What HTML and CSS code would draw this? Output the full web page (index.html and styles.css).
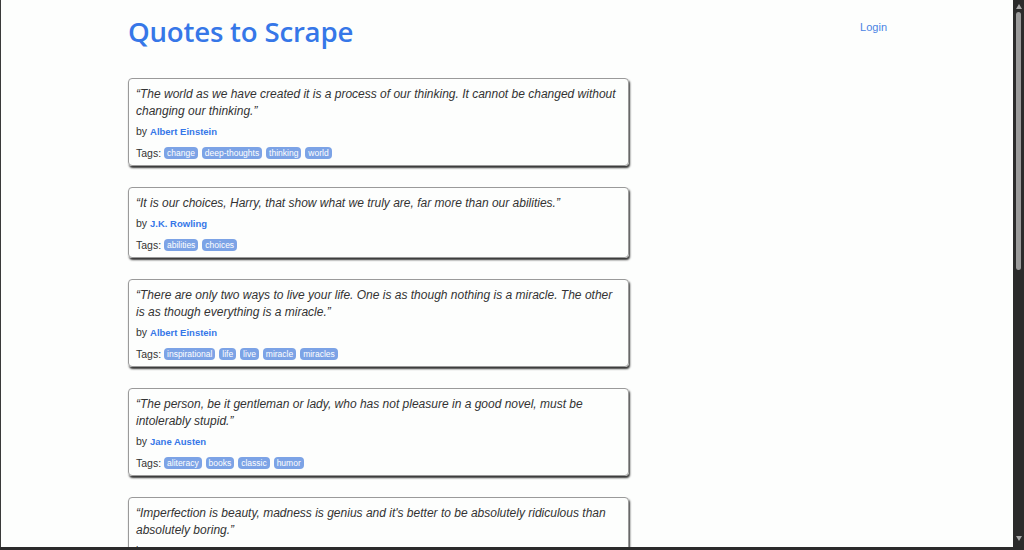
FILE: index.html
```html
<!DOCTYPE html>
<html lang="en">
<head>
  <meta charset="UTF-8">
  <meta name="viewport" content="width=device-width, initial-scale=1.0">
  <title>Quotes to Scrape</title>
  <link rel="stylesheet" href="styles.css">
</head>
<body>
  <div class="window">
    <div class="viewport">
      <div class="container">
        <!-- Cabecera -->
        <header class="header">
          <h1><a href="#">Quotes to Scrape</a></h1>
          <a class="login" href="#">Login</a>
        </header>

        <!-- Lista de citas -->
        <div class="quotes">
          <div class="quote">
            <span class="text">“The world as we have created it is a process of our thinking. It cannot be changed without changing our thinking.”</span>
            <div class="by">by <a class="author" href="#">Albert Einstein</a></div>
            <div class="tags">Tags:
              <a class="tag" href="#">change</a>
              <a class="tag" href="#">deep-thoughts</a>
              <a class="tag" href="#">thinking</a>
              <a class="tag" href="#">world</a>
            </div>
          </div>

          <div class="quote">
            <span class="text">“It is our choices, Harry, that show what we truly are, far more than our abilities.”</span>
            <div class="by">by <a class="author" href="#">J.K. Rowling</a></div>
            <div class="tags">Tags:
              <a class="tag" href="#">abilities</a>
              <a class="tag" href="#">choices</a>
            </div>
          </div>

          <div class="quote">
            <span class="text">“There are only two ways to live your life. One is as though nothing is a miracle. The other is as though everything is a miracle.”</span>
            <div class="by">by <a class="author" href="#">Albert Einstein</a></div>
            <div class="tags">Tags:
              <a class="tag" href="#">inspirational</a>
              <a class="tag" href="#">life</a>
              <a class="tag" href="#">live</a>
              <a class="tag" href="#">miracle</a>
              <a class="tag" href="#">miracles</a>
            </div>
          </div>

          <div class="quote">
            <span class="text">“The person, be it gentleman or lady, who has not pleasure in a good novel, must be intolerably stupid.”</span>
            <div class="by">by <a class="author" href="#">Jane Austen</a></div>
            <div class="tags">Tags:
              <a class="tag" href="#">aliteracy</a>
              <a class="tag" href="#">books</a>
              <a class="tag" href="#">classic</a>
              <a class="tag" href="#">humor</a>
            </div>
          </div>

          <div class="quote">
            <span class="text">“Imperfection is beauty, madness is genius and it's better to be absolutely ridiculous than absolutely boring.”</span>
            <div class="by">by <a class="author" href="#">Marilyn Monroe</a></div>
            <div class="tags">Tags:
              <a class="tag" href="#">be-yourself</a>
              <a class="tag" href="#">inspirational</a>
            </div>
          </div>
        </div>
      </div>
    </div>

    <!-- Barra de desplazamiento -->
    <div class="scrollbar">
      <span class="arrow up"></span>
      <div class="track"><div class="thumb"></div></div>
      <span class="arrow down"></span>
    </div>
  </div>
</body>
</html>
```

FILE: styles.css
```css
html, body {
  margin: 0;
  padding: 0;
  height: 550px;
  overflow: hidden;
}
body {
  font-family: 'Liberation Sans', Arial, sans-serif;
  color: #333;
  background-color: #2b2b2b;
}
a {
  text-decoration: none;
}
.window {
  display: flex;
  height: 547px;
  border-left: 1px solid #3a3a3a;
}
.viewport {
  flex: 1;
  overflow: hidden;
  background-color: #fdfefd;
}
.container {
  width: 758px;
  margin-left: 127px;
}
.header {
  display: flex;
  justify-content: space-between;
  align-items: flex-start;
  height: 78px;
}
.header h1 {
  margin: 12px 0 0;
  font-family: 'Open Sans', sans-serif;
  font-size: 27.6px;
  font-weight: 600;
  letter-spacing: -0.2px;
  line-height: 38px;
}
.header h1 a {
  color: #3677e8;
}
.login {
  margin-top: 20px;
  margin-right: -1px;
  font-size: 11px;
  line-height: 14px;
  color: #4a83e4;
}
.quote {
  width: 486px;
  padding: 7px 6px 4px 7px;
  margin-bottom: 21px;
  border: 1px solid #9a9a9a;
  border-radius: 4px;
  box-shadow: 1px 2px 2px #333;
}
.text {
  display: block;
  font-size: 12px;
  line-height: 17px;
  font-style: italic;
  margin-bottom: 4px;
}
.by {
  font-size: 10.5px;
  line-height: 14px;
}
.author {
  color: #3677e8;
  font-weight: bold;
  font-size: 9.5px;
}
.tags {
  margin-top: 6px;
  font-size: 10.5px;
  line-height: 16px;
}
.tag {
  display: inline-block;
  padding: 0 3px;
  margin-right: 1px;
  font-size: 8.5px;
  line-height: 12px;
  border-radius: 4px;
  color: #fff;
  background-color: #7ca3e6;
  vertical-align: 1px;
}
.scrollbar {
  width: 11px;
  display: flex;
  flex-direction: column;
  align-items: center;
  background-color: #2b2b2b;
}
.track {
  flex: 1;
  width: 100%;
  display: flex;
  justify-content: center;
}
.thumb {
  width: 5px;
  height: 258px;
  margin-top: 1px;
  border-radius: 3px;
  background-color: #9b9b9b;
}
.arrow {
  width: 0;
  height: 0;
  border-left: 3px solid transparent;
  border-right: 3px solid transparent;
}
.arrow.up {
  margin-top: 4px;
  border-bottom: 5px solid #a8a8a8;
  margin-bottom: 2px;
}
.arrow.down {
  margin-bottom: 6px;
  border-top: 5px solid #a8a8a8;
}
```
